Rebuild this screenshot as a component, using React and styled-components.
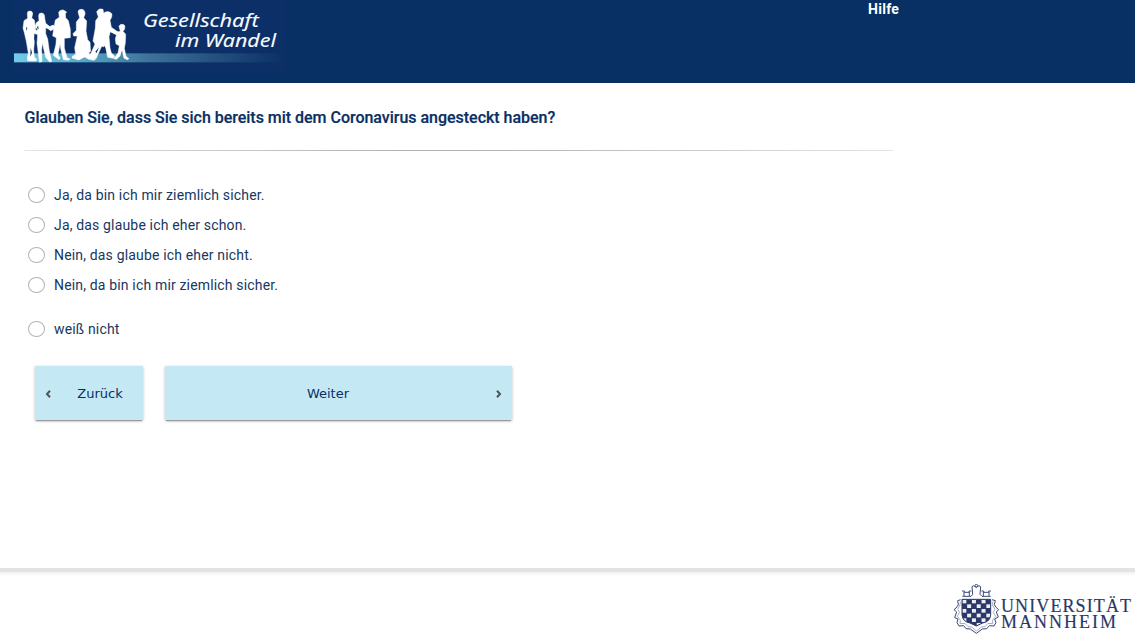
import React from "react";
import styled, { createGlobalStyle } from "styled-components";

const GlobalStyle = createGlobalStyle`
  * { box-sizing: border-box; }
  body { margin: 0; background: #fff; color: #0a2f63; font-family: Roboto, "Liberation Sans", sans-serif; overflow: hidden; }
`;
const Page = styled.div`
  display: flex;
  flex-direction: column;
  height: 637px;
`;
const Header = styled.header`
  display: flex;
  height: 83px;
  padding-left: 14px;
  background: #083064;
`;
const HeaderLogo = styled.svg`
  width: 271px;
  height: 72px;
  flex: none;
`;
const HelpLink = styled.a`
  margin-left: 583px;
  color: #fff;
  font-size: 14px;
  font-weight: 700;
  line-height: 18px;
  letter-spacing: 0.3px;
`;
const Main = styled.main`
  flex: 1;
  padding: 24px 24px 0;
`;
const Question = styled.h1`
  margin: 0;
  padding-left: 0.5px;
  font-size: 16px;
  font-weight: 500;
  line-height: 21px;
  letter-spacing: -0.02px;
  -webkit-text-stroke: 0.2px currentColor;
`;
const Divider = styled.div`
  width: 869px;
  height: 1px;
  margin: 22px 0 29px;
  background: linear-gradient(to right, #e4e4e4, #b0b0b0 45%, #b4b4b4 55%, #e4e4e4);
`;
const Options = styled.div`
  display: flex;
  flex-direction: column;
`;
const Option = styled.label`
  display: flex;
  align-items: center;
  height: 30px;
  margin-top: ${(p) => (p.$separate ? "14px" : "0")};
  padding-left: 4px;
  gap: 9px;
  color: #17375f;
  font-size: 14px;
  letter-spacing: 0.165px;
`;
const Radio = styled.span`
  width: 17px;
  height: 16px;
  border: 1px solid #b3b3b3;
  border-radius: 50%;
  background: #fff;
`;
const Actions = styled.div`
  display: flex;
  gap: 22px;
  margin: 22px 0 0 11px;
`;
const Button = styled.button`
  display: flex;
  align-items: center;
  width: ${(p) => p.$width};
  height: 54px;
  padding: 0 10px;
  border: 0;
  background: #c5e9f4;
  color: #0a2f63;
  box-shadow: 0 2px 1px -1px rgba(0, 0, 0, 0.28), 0 1px 3px rgba(0, 0, 0, 0.26);
  font: 13px "DejaVu Sans", sans-serif;
`;
const Caption = styled.span`
  flex: 1;
  text-align: center;
  padding-left: ${(p) => p.$before || "0"};
  padding-right: ${(p) => p.$after || "0"};
`;
const Arrow = styled.svg`
  width: 6px;
  height: 8px;
  margin-top: 2px;
  fill: none;
  stroke: #505357;
  stroke-width: 2;
`;
const Footer = styled.footer`
  display: flex;
  justify-content: flex-end;
  height: 69px;
  padding: 12px 0 0;
  border-top: 4px solid #e3e3e3;
  background: linear-gradient(#f1f1f1, #fff 4px);
`;
const UniversityLogo = styled.svg`
  width: 187px;
  height: 53px;
`;

function SocietyLogo() {
  return (
    <HeaderLogo viewBox="42 0 813 216" role="img" aria-label="Gesellschaft im Wandel">
      <defs>
        <linearGradient id="band">
          <stop offset="0" stopColor="#72cce6" />
          <stop offset=".22" stopColor="#5aaecb" />
          <stop offset=".5" stopColor="#3d7299" />
          <stop offset=".78" stopColor="#204c7b" />
          <stop offset="1" stopColor="#0b2f66" />
        </linearGradient>
      </defs>
      <rect x="42" width="813" height="216" fill="#0b2f66" />
      <rect x="42" y="160" width="813" height="27" fill="url(#band)" />
      <g fill="#fff" stroke="#fff" strokeWidth="1.5">
        <path d="M82 40Q82 33 90 33Q98 33 98 42L95 54L103 60L106 80L108 97L102 102L103 126L101 151L103 171L111 179L107 183L83 182L82 174L85 160L79 124L73 98L69 84L72 62L83 55Z" />
        <path d="M116 48Q116 38 125 39Q135 40 134 54L137 70L151 81L160 75L164 82L153 91L137 83L137 101L143 117L148 153L155 184L149 186L137 172L130 142L127 129L125 149L126 184L119 187L117 176L111 130L113 104L103 100L104 93L114 89L105 80L109 68L117 62Z" />
        <path d="M176 36Q180 29 190 30L200 36L196 41L197 53L205 62L211 88L211 113L193 115L193 144L201 173L211 177L205 181L190 179L183 151L180 133L174 164L181 174L177 179L160 166L168 132L169 113L158 108L161 88L151 92L146 84L153 77L163 77L166 60L178 52Z" />
        <path d="M234 36Q235 27 245 28Q256 29 255 43L251 53L260 63L258 93L263 119L270 127L272 154L266 159L279 175L287 177L282 181L266 178L254 171L236 180L216 174L217 169L227 163L224 143L232 108L221 108L219 101L229 91L229 66L239 53Z" />
        <path d="M290 35Q297 23 309 28L311 40L316 36Q328 32 336 42L335 52L330 61L334 82L354 96L350 105L331 95L327 110L330 144L334 159L344 168L340 175L323 172L317 143L305 139L293 165L289 175L284 176L268 169L276 153L285 132L279 123L286 84L287 62L295 51Z" />
        <path d="M357 79Q360 71 369 73Q378 76 373 89L369 94L377 103L376 128L373 145L378 169L387 176L382 179L372 175L366 151L360 168L350 178L341 176L354 159L358 137L348 132L346 117L350 103L331 94L333 87L351 96L361 94Z" />
      </g>
      <g fill="#0b2f66">
        <path d="M92 143L96 158L91 170ZM103 107L106 113L103 124ZM286 155L297 142L290 159ZM313 137L317 146L309 143Z" />
        <path d="M80 79L78 92L82 86ZM114 76L111 84L116 88Z" />
      </g>
      <g fill="#f8fbff" stroke="#f8fbff" strokeWidth=".3" fontFamily='"Noto Sans", sans-serif' fontStyle="italic" fontSize="56">
        <text x="429" y="80" textLength="347" lengthAdjust="spacingAndGlyphs">Gesellschaft</text>
        <text x="525" y="142" textLength="303" lengthAdjust="spacingAndGlyphs">im Wandel</text>
      </g>
    </HeaderLogo>
  );
}

const squares = [];
for (let row = 0; row < 6; row += 1) {
  for (let col = 0; col < 6; col += 1) {
    if ((row + col) % 2 === 0) squares.push([66 + col * 14.4, 118 + row * 14]);
  }
}

function MannheimLogo() {
  return (
    <UniversityLogo viewBox="24 72 561 159" role="img" aria-label="Universität Mannheim">
      <defs>
        <clipPath id="shield"><path d="M66 118H152V164Q151 185 128 189L109 198L90 189Q67 185 66 164Z" /></clipPath>
      </defs>
      <g clipPath="url(#shield)">
        <rect x="65" y="117" width="88" height="82" fill="#2a3767" />
        {squares.map(([x, y]) => <rect key={`${x}-${y}`} x={x + 1} y={y + 1} width="12" height="11" fill="#eceef5" />)}
      </g>
      <path fill="none" stroke="#2a3767" strokeWidth="3" d="M66 118H152V164Q151 185 128 189L109 198L90 189Q67 185 66 164Z" />
      <g fill="none" stroke="#3c4976" strokeWidth="3">
        <path d="M67 109H93L98 103L96 80L101 77L109 82L117 77L122 80L120 103L126 109H152M72 108V96M88 108V96M130 108V96M147 108V96M66 93H73V97H87V93H94M124 93H131V97H146V93H153" />
        <circle cx="109" cy="77" r="4" />
        <path d="M62 119L53 122L55 135L48 144L42 149L50 156L44 173L54 177L51 188L57 198L71 197L78 206L91 207L109 220L127 207L140 206L148 197L162 198L168 188L164 177L175 171L169 156L176 149L168 142L163 134L166 122L156 119" />
        <path strokeWidth="2" stroke="#7882a1" d="M61 125L60 135L53 148L59 157L52 169L61 181L60 191L75 190L84 200L95 201L109 213L124 201L135 200L144 190L158 191L158 180L167 169L160 157L165 148L158 136L158 125" />
      </g>
      <g fill="#2a3767" stroke="#2a3767" strokeWidth=".5" fontFamily='"Liberation Serif", serif' fontSize="54">
        <text x="183" y="155" textLength="390">UNIVERSITÄT</text>
        <text x="183" y="204" textLength="345">MANNHEIM</text>
      </g>
    </UniversityLogo>
  );
}

const answers = [
  "Ja, da bin ich mir ziemlich sicher.",
  "Ja, das glaube ich eher schon.",
  "Nein, das glaube ich eher nicht.",
  "Nein, da bin ich mir ziemlich sicher.",
  "weiß nicht",
];

export default function App() {
  return (
    <>
      <GlobalStyle />
      <Page>
        <Header>
          <SocietyLogo />
          <HelpLink>Hilfe</HelpLink>
        </Header>
        <Main>
          <Question>Glauben Sie, dass Sie sich bereits mit dem Coronavirus angesteckt haben?</Question>
          <Divider />
          <Options>
            {answers.map((answer, i) => (
              <Option key={answer} $separate={i === 4}>
                <Radio />
                {answer}
              </Option>
            ))}
          </Options>
          <Actions>
            <Button $width="108px">
              <Arrow viewBox="0 0 6 8"><path d="M5 .8L2 4L5 7.2" /></Arrow>
              <Caption $before="16px">Zurück</Caption>
            </Button>
            <Button $width="347px">
              <Caption $after="15px">Weiter</Caption>
              <Arrow viewBox="0 0 6 8"><path d="M1 .8L4 4L1 7.2" /></Arrow>
            </Button>
          </Actions>
        </Main>
        <Footer>
          <MannheimLogo />
        </Footer>
      </Page>
    </>
  );
}
